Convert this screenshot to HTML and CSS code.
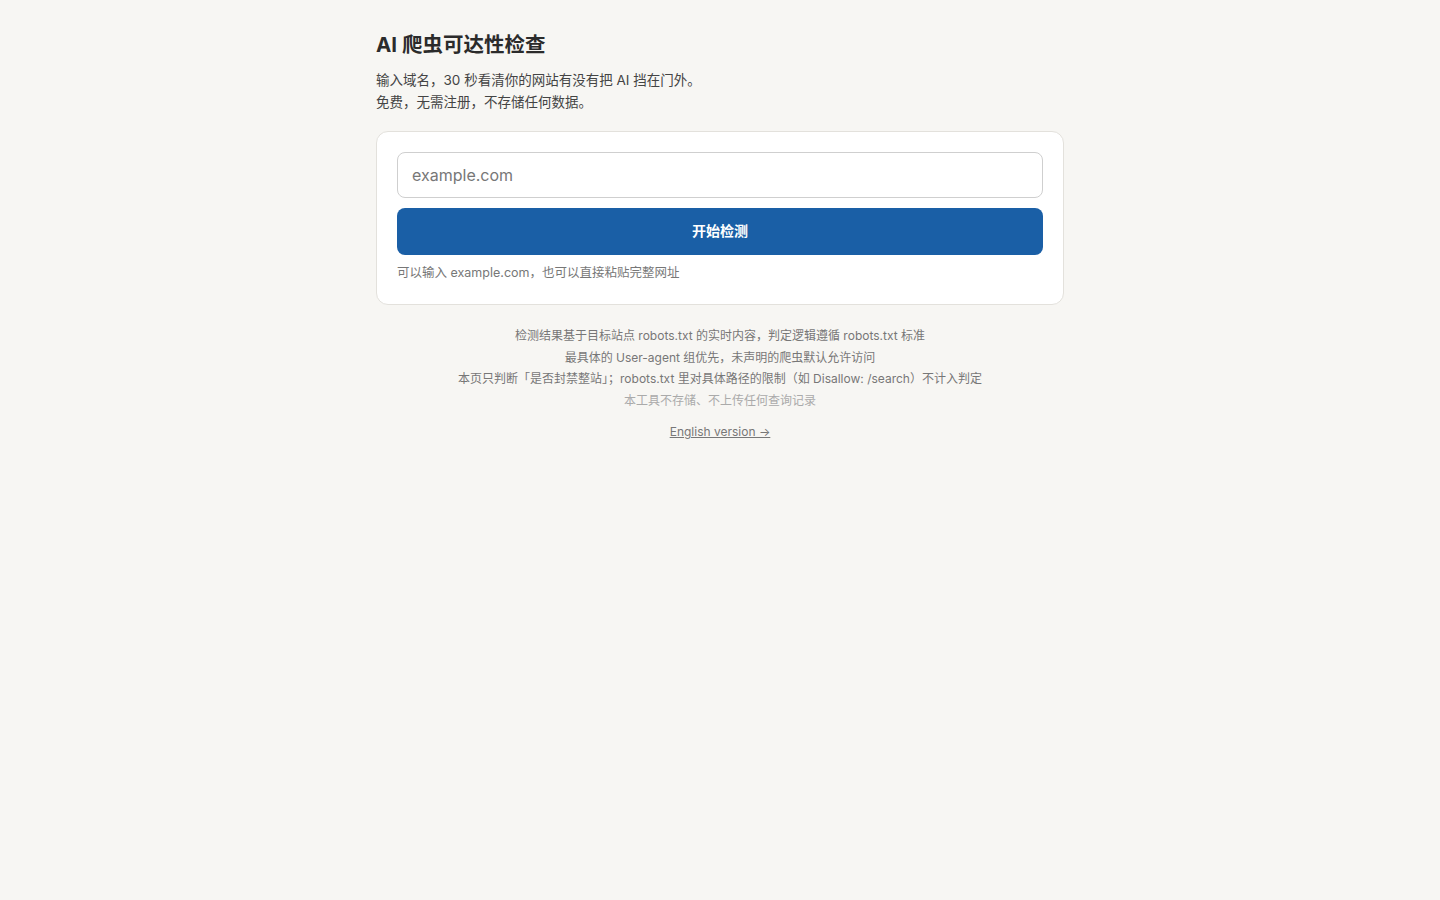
FILE: index.html
```html
<!DOCTYPE html>
<html lang="zh-CN">
<head>
    <meta charset="UTF-8">
    <meta name="viewport" content="width=device-width, initial-scale=1.0">
    <title>AI 爬虫可达性检查</title>
    <link rel="stylesheet" href="styles.css">
</head>
<body>
    <div class="container">
        <h1>AI 爬虫可达性检查</h1>
        <p class="intro">输入域名，30 秒看清你的网站有没有把 AI 挡在门外。<br>免费，无需注册，不存储任何数据。</p>

        <div class="card">
            <input class="domain-input" type="text" placeholder="example.com">
            <button class="check-btn">开始检测</button>
            <div class="hint">可以输入 example.com，也可以直接粘贴完整网址</div>
        </div>

        <div class="notes">
            <p>检测结果基于目标站点 robots.txt 的实时内容，判定逻辑遵循 robots.txt 标准</p>
            <p>最具体的 User-agent 组优先，未声明的爬虫默认允许访问</p>
            <p>本页只判断「是否封禁整站」；robots.txt 里对具体路径的限制（如 Disallow: /search）不计入判定</p>
            <p class="muted">本工具不存储、不上传任何查询记录</p>
        </div>

        <div class="lang-link"><a href="#">English version →</a></div>
    </div>
</body>
</html>
```

FILE: styles.css
```css
body {
    margin: 0;
    background: #f7f6f3;
    color: #2b2b2b;
    font-family: Inter, "Noto Sans CJK SC", sans-serif;
}

.container {
    width: 688px;
    margin: 0 auto;
    padding-top: 31px;
}

h1 {
    margin: 0 0 10px;
    font-size: 20.5px;
    font-weight: 700;
    line-height: 28px;
    color: #2b2b2b;
}

.intro {
    margin: 0 0 18px;
    font-size: 13.5px;
    line-height: 22px;
    color: #444;
}

.card {
    background: #fff;
    border: 1px solid #e3e1dc;
    border-radius: 12px;
    padding: 20px 20px 22px;
    display: flex;
    flex-direction: column;
}

.domain-input {
    box-sizing: border-box;
    height: 46px;
    padding: 0 14px;
    border: 1px solid #cfcfcf;
    border-radius: 8px;
    font-family: Inter, "Noto Sans CJK SC", sans-serif;
    font-size: 16px;
    color: #222;
    outline: none;
}

.domain-input::placeholder {
    color: #777;
}

.check-btn {
    margin-top: 10px;
    height: 47px;
    padding: 0 0 3px;
    border: none;
    border-radius: 8px;
    background: #1a5fa6;
    color: #fff;
    font-family: Inter, "Noto Sans CJK SC", sans-serif;
    font-size: 14px;
    font-weight: 700;
}

.hint {
    margin-top: 9px;
    font-size: 12.5px;
    line-height: 18px;
    color: #777;
}

.notes {
    margin-top: 20px;
    text-align: center;
    font-size: 12px;
    line-height: 21.7px;
    color: #777;
}

.notes p {
    margin: 0;
}

.notes .muted {
    color: #aaa;
}

.lang-link {
    margin-top: 11px;
    text-align: center;
    font-size: 12px;
    line-height: 18px;
}

.lang-link a {
    color: #777;
}
```
